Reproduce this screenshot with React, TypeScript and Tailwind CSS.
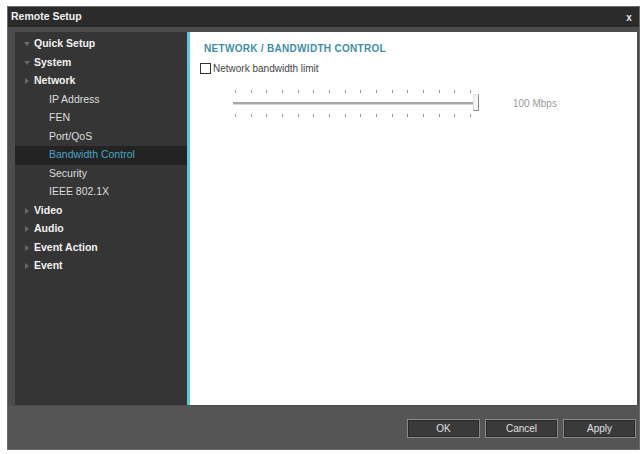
import React from "react";

const font = { fontFamily: '"Liberation Sans", Arial, sans-serif' };

type Item = { label: string; level: 0 | 1; arrow?: "down" | "right"; selected?: boolean };

const items: Item[] = [
  { label: "Quick Setup", level: 0, arrow: "down" },
  { label: "System", level: 0, arrow: "down" },
  { label: "Network", level: 0, arrow: "right" },
  { label: "IP Address", level: 1 },
  { label: "FEN", level: 1 },
  { label: "Port/QoS", level: 1 },
  { label: "Bandwidth Control", level: 1, selected: true },
  { label: "Security", level: 1 },
  { label: "IEEE 802.1X", level: 1 },
  { label: "Video", level: 0, arrow: "right" },
  { label: "Audio", level: 0, arrow: "right" },
  { label: "Event Action", level: 0, arrow: "right" },
  { label: "Event", level: 0, arrow: "right" },
];

function Arrow({ dir }: { dir: "down" | "right" }) {
  return (
    <svg width="6" height="6" viewBox="0 0 6 6" className="shrink-0">
      {dir === "down" ? (
        <path d="M0 1 L6 1 L3 5 Z" fill="#6a6a6a" />
      ) : (
        <path d="M1 0 L5 3 L1 6 Z" fill="#6a6a6a" />
      )}
    </svg>
  );
}

function Ticks() {
  return (
    <div className="flex justify-between w-[238px] pl-[2px]">
      {Array.from({ length: 16 }).map((_, i) => (
        <div key={i} className="w-[1px] h-[3px] bg-[#9a9a9a]" />
      ))}
    </div>
  );
}

function Btn({ label }: { label: string }) {
  return (
    <div className="w-[73px] h-[19px] flex items-center justify-center bg-[#3a3a3a] border border-[#8a8a8a] text-[10px] text-[#e0e0e0] shadow-[inset_0_0_0_1px_#2a2a2a]">
      {label}
    </div>
  );
}

export default function App() {
  return (
    <div className="w-[643px] h-[454px] bg-white pt-[6px] pl-[7px] pr-[3px] pb-[4px]" style={font}>
      <div className="w-full h-full flex flex-col bg-[#4c4c4c] border border-[#6a6a6a]">
        <div className="h-[20px] bg-[#2b2b2b] flex items-center justify-between px-[3px]">
          <span className="text-[10.5px] font-bold text-[#f0f0f0]">Remote Setup</span>
          <span className="w-[12px] h-[12px] flex items-center justify-center text-[10px] font-bold text-[#e8e8e8] mr-[1px]">x</span>
        </div>
        <div className="flex-1 flex px-[7px] pt-[5px] pr-[2px] min-h-0">
          <div className="w-[172px] h-[373px] bg-[#353535] pt-[3px]">
            {items.map((it) => (
              <div
                key={it.label}
                className={`h-[18.5px] flex items-center text-[10.5px] ${
                  it.selected ? "bg-[#232323]" : ""
                } ${it.level === 0 ? "pl-[9px] font-bold text-[#f2f2f2]" : "pl-[34px] text-[#dedede]"}`}
              >
                {it.arrow && <Arrow dir={it.arrow} />}
                <span className={`${it.arrow ? "ml-[4px]" : ""} ${it.selected ? "text-[#4aa3c6]" : ""}`}>{it.label}</span>
              </div>
            ))}
          </div>
          <div className="w-[3px] h-[373px] bg-[#5ec8d8]" />
          <div className="flex-1 h-[373px] bg-white pl-[12px] pt-[9px]">
            <div className="text-[10px] font-bold text-[#3d8fa6] tracking-[0.3px] ml-[2px]">NETWORK / BANDWIDTH CONTROL</div>
            <div className="flex items-center mt-[5px] -ml-[2px]">
              <div className="w-[11px] h-[11px] border-[1.5px] border-[#333] bg-white" />
              <span className="ml-[2px] text-[10px] text-[#444]">Network bandwidth limit</span>
            </div>
            <div className="flex items-center mt-[14px] ml-[31px]">
              <div className="flex flex-col gap-[9px]">
                <Ticks />
                <div className="relative w-[240px] h-[3px] bg-[#a8a8a8] border-b border-[#d8d8d8]">
                  <div className="absolute right-[-6px] top-[-8px] w-[6px] h-[17px] bg-[#f4f4f4] border border-[#8a8a8a] border-l-[#e0e0e0] border-t-[#e0e0e0]" />
                </div>
                <Ticks />
              </div>
              <span className="ml-[40px] text-[10px] text-[#9a9a9a]">100 Mbps</span>
            </div>
          </div>
        </div>
        <div className="h-[43px] bg-[#555555] flex items-center justify-end gap-[5px] pr-[3px] pt-[2px]">
          <Btn label="OK" />
          <Btn label="Cancel" />
          <Btn label="Apply" />
        </div>
      </div>
    </div>
  );
}
